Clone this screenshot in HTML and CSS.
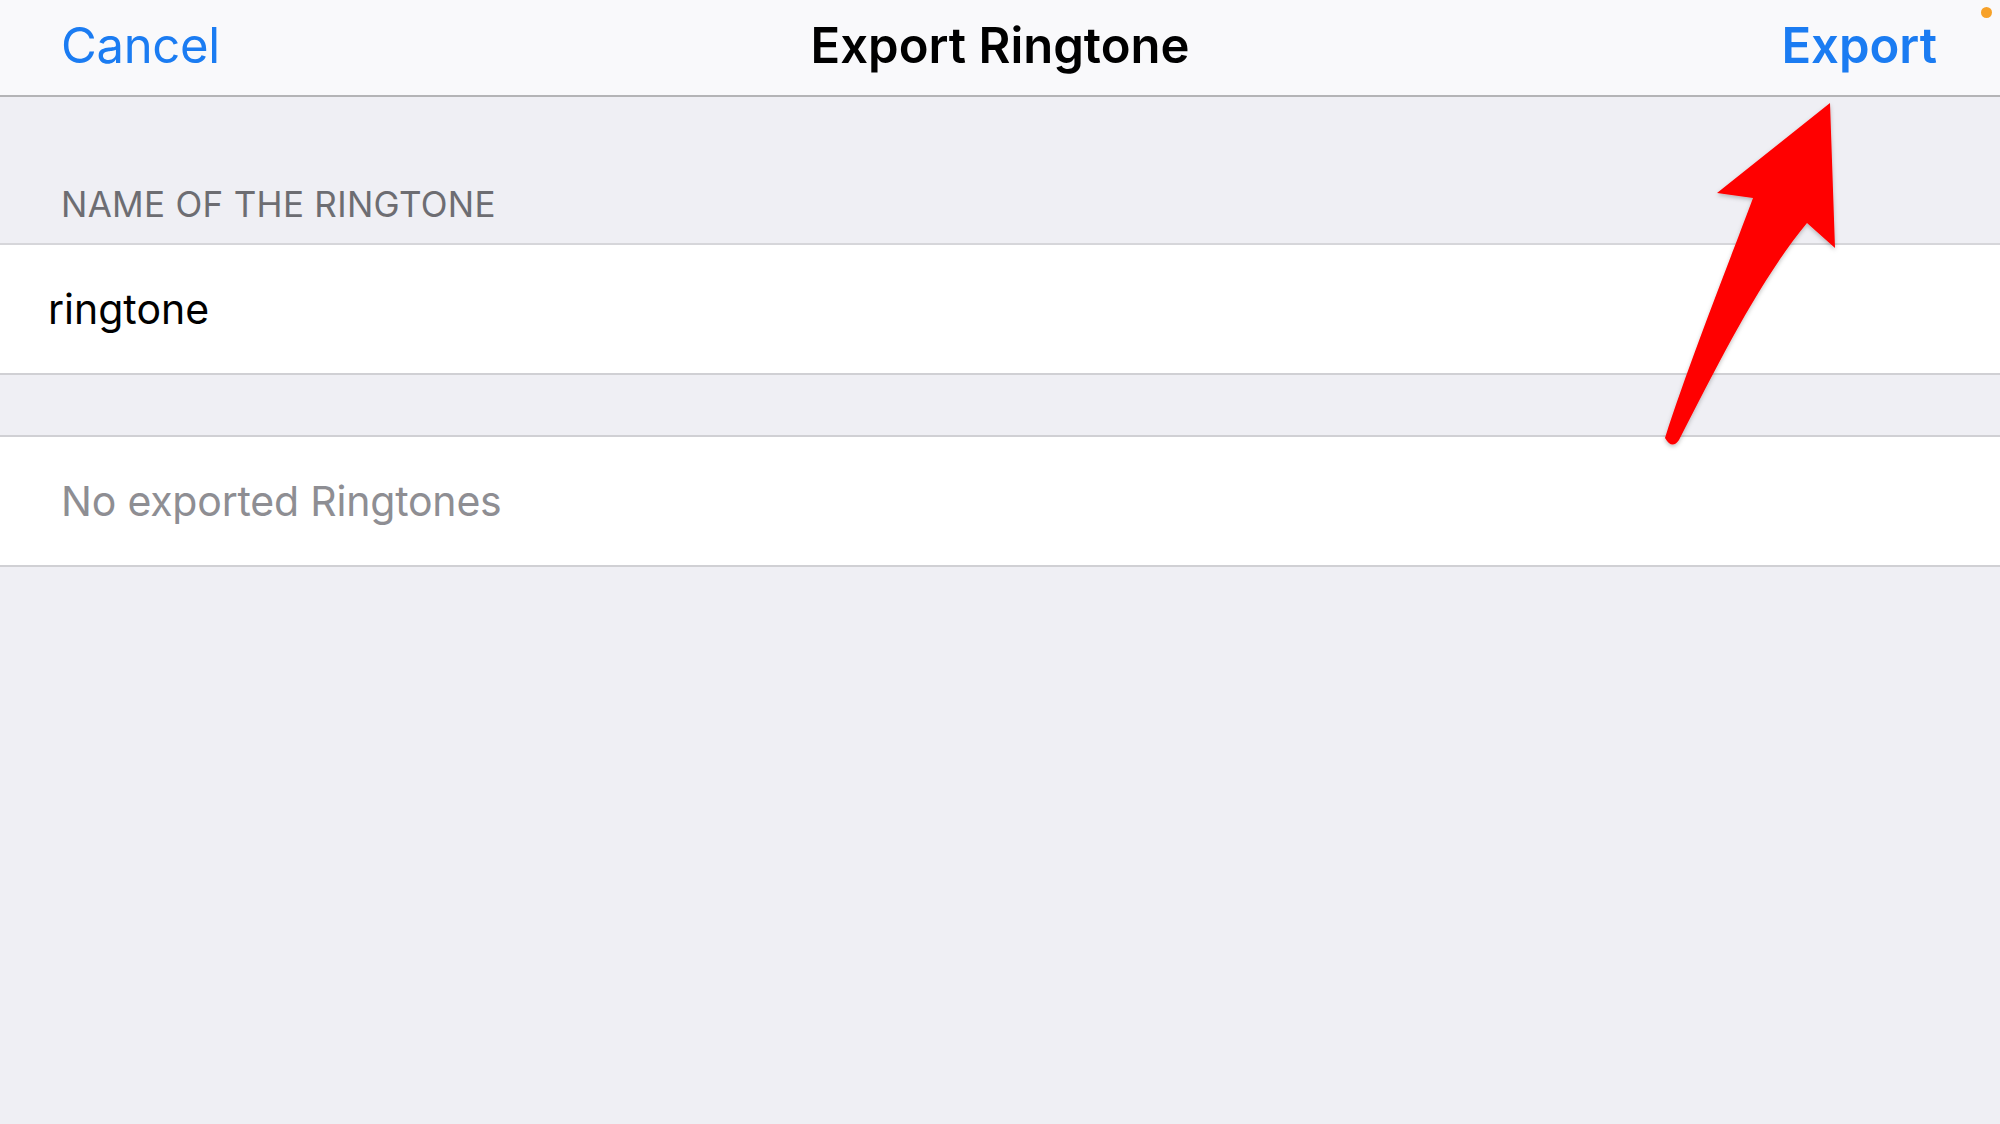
FILE: index.html
```html
<!DOCTYPE html>
<html lang="en">
<head>
<meta charset="utf-8">
<title>Export Ringtone</title>
<link rel="stylesheet" href="styles.css">
</head>
<body>
<div class="screen">
  <header class="navbar">
    <span class="nav-btn cancel">Cancel</span>
    <span class="nav-title">Export Ringtone</span>
    <span class="nav-btn export">Export</span>
  </header>
  <div class="section-header">NAME OF THE RINGTONE</div>
  <div class="row name-row">ringtone</div>
  <div class="spacer"></div>
  <div class="row empty-row">No exported Ringtones</div>
  <span class="status-dot"></span>
  <svg class="arrow" width="2000" height="1124" viewBox="0 0 2000 1124">
    <defs>
      <filter id="sh" x="-20%" y="-20%" width="140%" height="140%">
        <feDropShadow dx="0" dy="2" stdDeviation="2" flood-color="#000" flood-opacity="0.25"/>
      </filter>
    </defs>
    <path filter="url(#sh)" fill="#ff0000" d="M1830 103 L1835 248 L1807 223 C1760 280 1720 360 1679 440 Q1672 450 1665 438 C1690 360 1730 260 1753 198 L1717 193 Z"/>
  </svg>
</div>
</body>
</html>
```
FILE: styles.css
```css
html, body {
  margin: 0;
  padding: 0;
}
body {
  background: #efeff4;
  font-family: Inter, "Noto Sans", sans-serif;
}
.screen {
  position: relative;
  width: 2000px;
  height: 1124px;
  overflow: hidden;
  background: #efeff4;
}
.navbar {
  height: 97px;
  box-sizing: border-box;
  padding: 0 63px 4px 61px;
  background: #f9f9fb;
  border-bottom: 2px solid #b4b4b6;
  display: flex;
  align-items: center;
  justify-content: space-between;
  position: relative;
}
.nav-btn {
  color: #1b7cf2;
  font-size: 49px;
  line-height: 1;
}
.cancel {
  font-weight: 400;
  letter-spacing: -0.3px;
}
.export {
  font-weight: 600;
}
.nav-title {
  position: absolute;
  left: 0;
  right: 0;
  top: 0;
  bottom: 4px;
  display: flex;
  align-items: center;
  justify-content: center;
  font-size: 49px;
  font-weight: 600;
  color: #000;
  line-height: 1;
  pointer-events: none;
}
.section-header {
  height: 148px;
  box-sizing: border-box;
  padding: 0 0 18px 61px;
  display: flex;
  align-items: flex-end;
  font-size: 35px;
  color: #6d6d72;
  letter-spacing: 0.3px;
  border-bottom: 2px solid #d6d6da;
}
.row {
  background: #fff;
  height: 128px;
  display: flex;
  align-items: center;
  font-size: 41px;
  border-bottom: 2px solid #d0d0d4;
}
.name-row {
  padding-left: 48px;
  color: #000;
}
.spacer {
  height: 60px;
  border-bottom: 2px solid #d0d0d4;
}
.empty-row {
  padding-left: 61px;
  color: #8e8e93;
  letter-spacing: -0.2px;
}
.status-dot {
  position: absolute;
  right: 8px;
  top: 7px;
  width: 11px;
  height: 11px;
  border-radius: 50%;
  background: #f7a128;
}
.arrow {
  position: absolute;
  left: 0;
  top: 0;
  pointer-events: none;
}
```
